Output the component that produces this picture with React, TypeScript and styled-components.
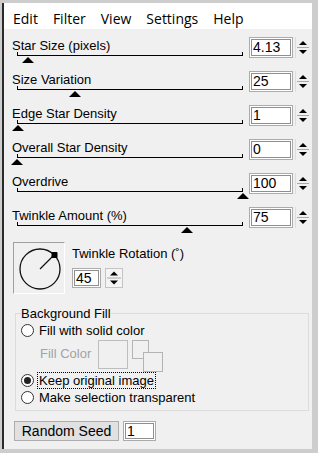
import styled, { createGlobalStyle } from "styled-components";

const GlobalStyle = createGlobalStyle`
  html, body {
    margin: 0;
    padding: 0;
  }
  body {
    background: #cdcdcd;
    font-family: "Liberation Sans", Arial, sans-serif;
    color: #000;
  }
`;

const Frame = styled.div`
  width: 318px;
  height: 453px;
  box-sizing: border-box;
  padding: 3px 6px 4px 2px;
  display: flex;
`;

const Panel = styled.div`
  flex: 1;
  display: flex;
  flex-direction: column;
  background: #f0f0f0;
  border-left: 2px solid #2a2a2a;
`;

const MenuBar = styled.div`
  height: 26px;
  box-sizing: border-box;
  padding: 4px 0 0 9px;
  background: #fff;
  display: flex;
  align-items: center;
  gap: 15px;
  font-family: "Open Sans", sans-serif;
  font-size: 14px;
`;

const MenuItem = styled.span``;

const Sliders = styled.div`
  padding-top: 7px;
`;

const SliderRow = styled.div`
  height: 34px;
  display: flex;
  padding-left: 8px;
`;

const LeftCol = styled.div`
  width: 231px;
`;

const Label = styled.div`
  font-size: 13px;
  line-height: 15px;
  margin-top: 2px;
`;

const Track = styled.div`
  position: relative;
  margin: 2px 0 0 5px;
  height: 0;
  border-top: 1px solid #000;
  &::before,
  &::after {
    content: "";
    position: absolute;
    bottom: 0;
    width: 1px;
    height: 4px;
    background: #000;
  }
  &::before {
    left: 0;
  }
  &::after {
    right: 0;
  }
`;

const Thumb = styled.div`
  position: absolute;
  top: 1px;
  width: 0;
  height: 0;
  border-left: 6px solid transparent;
  border-right: 6px solid transparent;
  border-bottom: 6px solid #000;
`;

const NumBox = styled.div<{ $w: number; $h: number }>`
  width: ${(p) => p.$w}px;
  height: ${(p) => p.$h}px;
  box-sizing: border-box;
  border: 1px solid #ababab;
  box-shadow: inset 0 0 0 1px #fff, inset 0 0 0 2px #8f8f8f;
  background: #fff;
  font-size: 14px;
  line-height: ${(p) => p.$h - 2}px;
  padding-left: 3px;
`;

const RowBox = styled.div`
  margin: 1px 0 0 6px;
`;

const Spin = styled.div`
  margin: 1px 0 0 2px;
  width: 15px;
  height: 21px;
  box-sizing: border-box;
  border-left: 1px solid #dedede;
`;

const DialSection = styled.div`
  display: flex;
  margin-top: 2px;
  padding-left: 9px;
`;

const DialBox = styled.div`
  width: 52px;
  height: 52px;
  box-sizing: border-box;
  border: 1px solid;
  border-color: #a0a0a0 #ffffff #ffffff #a0a0a0;
  display: flex;
`;

const RotationCol = styled.div`
  margin-left: 7px;
`;

const RotLabel = styled.div`
  font-size: 13px;
  line-height: 15px;
  margin-top: 4px;
`;

const RotInputs = styled.div`
  display: flex;
  margin-top: 7px;
`;

const SpinButton = styled.div`
  margin-left: 4px;
  width: 18px;
  height: 20px;
  box-sizing: border-box;
  border: 1px solid #c4c4c4;
  background: #f4f4f4;
  display: flex;
`;

const Group = styled.fieldset`
  margin: 12px 3px 0 11px;
  padding: 0 4px 4px 5px;
  border: 1px solid #dcdcdc;
  min-width: 0;
`;

const Legend = styled.legend`
  padding: 0;
  font-size: 13px;
  line-height: 15px;
`;

const RadioRow = styled.div<{ $h: number }>`
  height: ${(p) => p.$h}px;
  display: flex;
  align-items: center;
  gap: 5px;
  font-size: 13px;
`;

const Radio = styled.span<{ $on?: boolean }>`
  width: 13px;
  height: 13px;
  box-sizing: border-box;
  border-radius: 50%;
  border: 1px solid #333;
  background: #fff;
  display: flex;
  align-items: center;
  justify-content: center;
  &::after {
    content: "";
    width: 7px;
    height: 7px;
    border-radius: 50%;
    background: ${(p) => (p.$on ? "#222" : "transparent")};
  }
`;

const RadioText = styled.span<{ $focus?: boolean }>`
  line-height: 15px;
  padding: 0 1px;
  margin-left: -1px;
  outline: ${(p) => (p.$focus ? "1px dotted #000" : "none")};
`;

const FillRow = styled.div`
  height: 32px;
  margin-top: 2px;
  display: flex;
  align-items: flex-start;
`;

const FillLabel = styled.span`
  width: 58px;
  padding-left: 19px;
  margin-top: 6px;
  font-size: 13px;
  line-height: 15px;
  color: #a3a3a3;
`;

const Swatch = styled.div`
  width: 30px;
  height: 29px;
  box-sizing: border-box;
  border: 1px solid #bdbdbd;
`;

const SwapIcon = styled.svg`
  margin-left: 4px;
`;

const BottomRow = styled.div`
  display: flex;
  margin-top: 10px;
  padding-left: 10px;
`;

const Button = styled.div`
  width: 105px;
  height: 20px;
  box-sizing: border-box;
  border: 1px solid #adadad;
  background: #e1e1e1;
  font-size: 14px;
  line-height: 18px;
  text-align: center;
`;

const SeedBox = styled.div`
  margin-left: 4px;
`;

const Arrows = ({ w, h }: { w: number; h: number }) => {
  const cx = w / 2;
  const mid = h / 2;
  return (
    <svg width={w} height={h} viewBox={`0 0 ${w} ${h}`}>
      <path d={`M${cx - 4} ${mid - 2.5} L${cx} ${mid - 6.5} L${cx + 4} ${mid - 2.5} Z`} fill="#000" />
      <line x1="1" y1={mid} x2={w - 1} y2={mid} stroke="#a8a8a8" />
      <path d={`M${cx - 4} ${mid + 2.5} L${cx} ${mid + 6.5} L${cx + 4} ${mid + 2.5} Z`} fill="#000" />
    </svg>
  );
};

const TRACK = 226;

const sliders = [
  { label: "Star Size (pixels)", value: "4.13", pct: 0.05 },
  { label: "Size Variation", value: "25", pct: 0.257 },
  { label: "Edge Star Density", value: "1", pct: 0.005 },
  { label: "Overall Star Density", value: "0", pct: 0 },
  { label: "Overdrive", value: "100", pct: 1 },
  { label: "Twinkle Amount (%)", value: "75", pct: 0.75 },
];

export default function App() {
  return (
    <>
      <GlobalStyle />
      <Frame>
        <Panel>
          <MenuBar>
            {["Edit", "Filter", "View", "Settings", "Help"].map((m) => (
              <MenuItem key={m}>{m}</MenuItem>
            ))}
          </MenuBar>

          <Sliders>
            {sliders.map((s) => (
              <SliderRow key={s.label}>
                <LeftCol>
                  <Label>{s.label}</Label>
                  <Track>
                    <Thumb style={{ left: s.pct * TRACK - 6 }} />
                  </Track>
                </LeftCol>
                <RowBox>
                  <NumBox $w={44} $h={21}>{s.value}</NumBox>
                </RowBox>
                <Spin>
                  <Arrows w={14} h={21} />
                </Spin>
              </SliderRow>
            ))}
          </Sliders>

          <DialSection>
            <DialBox>
              <svg width="50" height="50" viewBox="0 0 50 50">
                <circle cx="26" cy="26" r="20" fill="none" stroke="#111" strokeWidth="1.3" />
                <line x1="26" y1="26" x2="40" y2="12" stroke="#111" strokeWidth="1.2" />
                <rect x="37.5" y="9" width="6" height="6" rx="1" fill="#000" />
              </svg>
            </DialBox>
            <RotationCol>
              <RotLabel>Twinkle Rotation (˚)</RotLabel>
              <RotInputs>
                <NumBox $w={29} $h={20}>45</NumBox>
                <SpinButton>
                  <Arrows w={16} h={18} />
                </SpinButton>
              </RotInputs>
            </RotationCol>
          </DialSection>

          <Group>
            <Legend>Background Fill</Legend>
            <RadioRow $h={16} style={{ marginTop: 1 }}>
              <Radio />
              <RadioText>Fill with solid color</RadioText>
            </RadioRow>
            <FillRow>
              <FillLabel>Fill Color</FillLabel>
              <Swatch />
              <SwapIcon width="31" height="32" viewBox="0 0 31 32">
                <rect x="0.5" y="0.5" width="16" height="18" fill="none" stroke="#b4b4b4" />
                <rect x="11.5" y="12.5" width="19" height="19" fill="#f0f0f0" stroke="#b4b4b4" />
              </SwapIcon>
            </FillRow>
            <RadioRow $h={17}>
              <Radio $on />
              <RadioText $focus>Keep original image</RadioText>
            </RadioRow>
            <RadioRow $h={17}>
              <Radio />
              <RadioText>Make selection transparent</RadioText>
            </RadioRow>
          </Group>

          <BottomRow>
            <Button>Random Seed</Button>
            <SeedBox>
              <NumBox $w={33} $h={20}>1</NumBox>
            </SeedBox>
          </BottomRow>
        </Panel>
      </Frame>
    </>
  );
}
